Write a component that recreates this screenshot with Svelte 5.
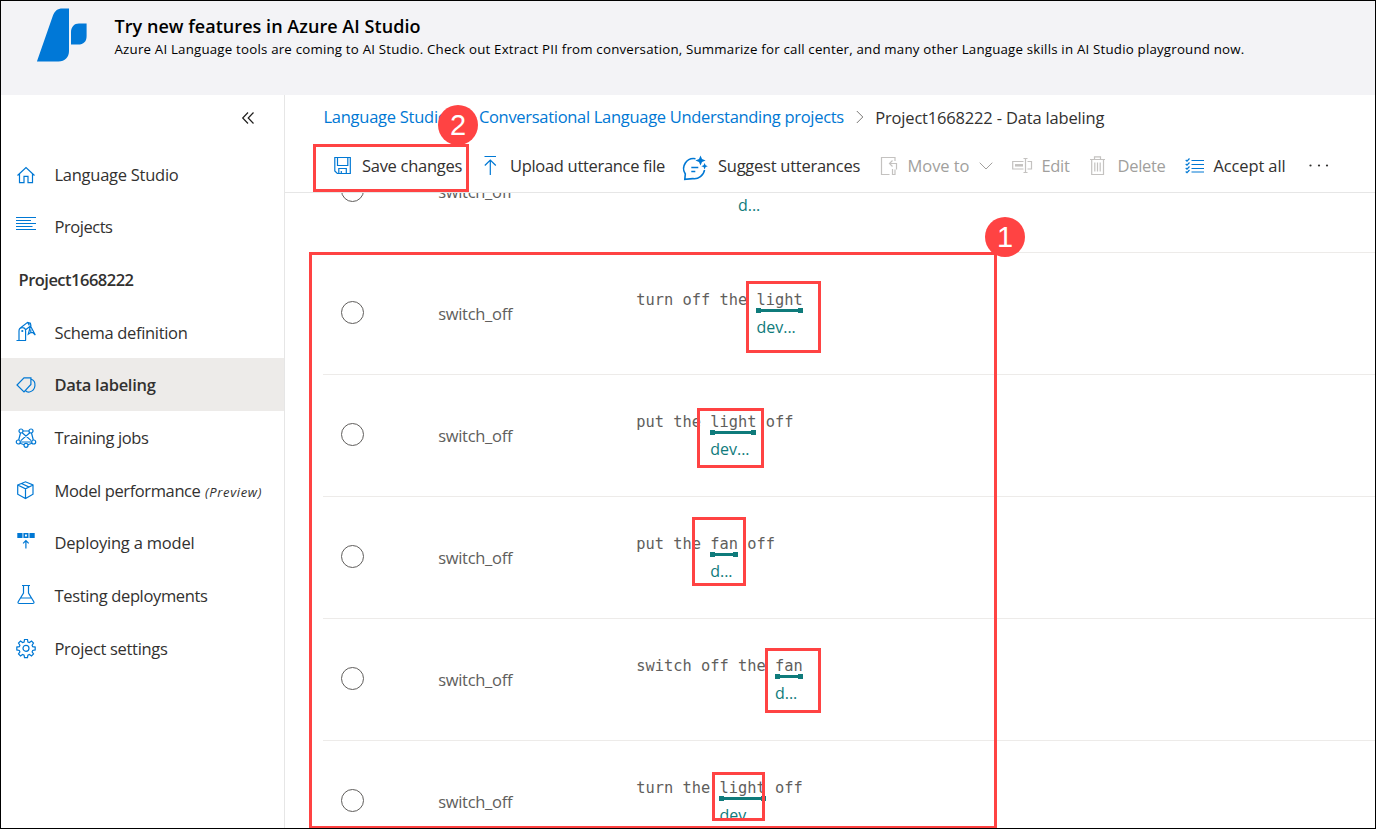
<script>
  const nav = [
    { icon: 'home', label: 'Language Studio', width: 124 },
    { icon: 'list', label: 'Projects', width: 58 },
    { heading: true, label: 'Project1668222', width: 115 },
    { icon: 'arm', label: 'Schema definition', width: 133 },
    { icon: 'tag', label: 'Data labeling', width: 101, active: true },
    { icon: 'graph', label: 'Training jobs', width: 94 },
    { icon: 'cube', label: 'Model performance', width: 146, note: '(Preview)' },
    { icon: 'deploy', label: 'Deploying a model', width: 140 },
    { icon: 'flask', label: 'Testing deployments', width: 153 },
    { icon: 'gear', label: 'Project settings', width: 113 }
  ];

  const commands = [
    { icon: 'save', label: 'Save changes', width: 100, slot: 150, text: 30 },
    { icon: 'upload', label: 'Upload utterance file', width: 155, slot: 199, text: 28 },
    { icon: 'suggest', label: 'Suggest utterances', width: 142, slot: 198, text: 37 },
    { icon: 'move', label: 'Move to', width: 62, slot: 133, text: 28.5, off: true, menu: true },
    { icon: 'edit', label: 'Edit', width: 28, slot: 77, text: 29.5, off: true },
    { icon: 'trash', label: 'Delete', width: 48, slot: 96, text: 28.5, off: true },
    { icon: 'checks', label: 'Accept all', width: 72, slot: 124, text: 28.5 }
  ];

  const rows = [
    { before: '           ', entity: '     ', after: '', tag: 'd...' },
    { before: 'turn off the ', entity: 'light', after: '', tag: 'dev...' },
    { before: 'put the ', entity: 'light', after: ' off', tag: 'dev...' },
    { before: 'put the ', entity: 'fan', after: ' off', tag: 'd...' },
    { before: 'switch off the ', entity: 'fan', after: '', tag: 'd...' },
    { before: 'turn the ', entity: 'light', after: ' off', tag: 'dev...' }
  ];

  const boxes = [
    [313, 144, 156, 48], [309, 252, 688, 577], [746, 281, 75, 72], [697, 408, 67, 60],
    [692, 517, 54, 69], [765, 648, 56, 65], [712, 772, 53, 49]
  ];

  // Spreads the letters of a label evenly over the width given.
  function fit(node, width) {
    const natural = node.getBoundingClientRect().width;
    node.style.letterSpacing = (width - natural) / node.textContent.length + 'px';
  }
</script>

{#snippet glyph(name)}
  {#if name === 'home'}
    <svg viewBox="0 0 20 20"><path d="M1.5 10.5 10 2.5l8.5 8M3.5 9v8.700H8v-6.400h4v6.400h4.500V9" /></svg>
  {:else if name === 'list'}
    <svg viewBox="0 0 20 20"><path d="M0 .5h20M0 3.500h15M0 6.500h20M0 9.500h16.500M0 12.500h20" /></svg>
  {:else if name === 'arm'}
    <svg viewBox="0 0 20 20"><path d="M.5 17.500h9.500M3 17.500V8a3.300 3.300 0 0 1 6.600 0v9.500M4 5.300 11.600-.6l2.800.8.500 2.500L9.300 6.900M11.600-.6l1.800 3M14.500 3l-2.200 8.200 2.500-1.700 2 .1 2.500 2.400L14.500 3M14.800 9.500V6.500" /><circle cx="6.300" cy="8" r=".5" /></svg>
  {:else if name === 'tag'}
    <svg viewBox="0 0 20 20"><path d="M8 2.800h6.900V9.500L8 17 1 10Z M15 4c6 2.300 5 11.500-1.500 13-1.800.4-3-.1-4-1.300" /></svg>
  {:else if name === 'graph'}
    <svg viewBox="0 0 20 20"><g><path d="M7 3h6M4.500 5 2.700 12M15.500 5l1.800 7M6.200 4.800l9 7.800M13.800 4.800l-9 7.800M4.500 14h11M4 15.300l4.200 1.500M16 15.300l-4.200 1.500" /><circle cx="5" cy="3" r="2" /><circle cx="15" cy="3" r="2" /><circle cx="2.300" cy="14" r="2" /><circle cx="17.700" cy="14" r="2" /><circle cx="10" cy="17.300" r="2" /></g></svg>
  {:else if name === 'cube'}
    <svg viewBox="0 0 20 20"><path d="M1.700 4 9.500.8 17 4v9.200L9.500 17.500 1.700 13.200ZM1.700 4l7.800 3.800L17 4M9.500 7.800v9.700M5.500 2.500l7.700 3.600" /></svg>
  {:else if name === 'deploy'}
    <svg viewBox="0 0 20 20"><path class="solid" d="M1.300 0h5.200v5H1.300ZM13.500 0h5.200v5h-5.200Z" /><path class="bold" d="M8.200.800h3.500v3.400H8.200Z" /><path d="M9.900 15.500V7.700M7.100 10.300l2.800-2.800 2.800 2.800" /></svg>
  {:else if name === 'flask'}
    <svg viewBox="0 0 20 20"><path d="M6-.5h8M7.500-.5V7L2.200 15.800c-.5 1 0 1.700 1 1.700h13.600c1 0 1.500-.7 1-1.700L12.500 7V-.5M5 12h10" /></svg>
  {:else if name === 'gear'}
    <svg viewBox="0 0 20 20"><circle cx="10" cy="9.300" r="3" /><path d="m8.500.5 3 0 .4 2.500 1.500.6 2.100-1.500 2 2-1.400 2.100.6 1.500 2.500.4v2.800l-2.500.5-.6 1.500 1.400 2.100-2 2-2.100-1.500-1.500.6-.4 2.500h-3l-.4-2.500-1.500-.6-2.100 1.500-2-2 1.400-2.100-.6-1.500-2.500-.5V8.100l2.500-.4.6-1.500-1.400-2.100 2-2 2.100 1.500 1.500-.6Z" /></svg>
  {:else if name === 'save'}
    <svg viewBox="0 0 20 20"><path d="M2.800 1.500h15.500v16H5.300L2.800 15ZM5.500 1.500v8h10.300v-8M6.800 17.500v-5h7.500v5M9.300 15v2.500" /></svg>
  {:else if name === 'upload'}
    <svg viewBox="0 0 20 20"><path d="M2.500 .5h11.500M8.300 19V4M2.800 9.500 8.300 4l5.500 5.500" /></svg>
  {:else if name === 'suggest'}
    <svg class="wide" viewBox="0 0 26 26"><path class="bold" d="M14.500 3.700A10 10 0 0 0 4.300 19L3.800 24.300l8-.7A10.300 10.300 0 0 0 23.500 15M10.300 12.500h7M10.300 16.500h4" /><path class="solid" d="m19.500.5 1.500 3.600 3.600 1.400-3.600 1.400-1.500 3.600-1.500-3.600-3.600-1.400 3.600-1.400ZM23.600 8l1 2.300 2.200.9-2.200.9-1 2.400-1-2.400-2.300-.9 2.300-.9Z" /></svg>
  {:else if name === 'move'}
    <svg viewBox="0 0 20 20"><path d="M16 5V1.500H2.500v17h8M16 13.500v5h-2.500V13M17.500 13.500V7.500H10.500M13.500 4.500l-3 3 3 3" /></svg>
  {:else if name === 'edit'}
    <svg viewBox="0 0 20 20"><path d="M11.500 5.500H.7v7.500h10.800M15.500 5.500h4V13h-4M11.500 2.500h4M11.500 16.500h4M13.500 2.500v14" /><path class="thick" d="M3 9.300h8" /></svg>
  {:else if name === 'trash'}
    <svg viewBox="0 0 20 20"><path d="M1 3.500h15M5.500 3V.8h6V3M2.700 3.500v15h11.800v-15M5.800 6.500v9M8.500 6.500v9M11.200 6.500v9" /></svg>
  {:else if name === 'checks'}
    <svg viewBox="0 0 20 20"><path d="M6.500 4.500H19M6.500 8.500H19M6.500 12.500H19M6.500 16H19M.7 4l1.300 1.200L4.500 2.500M.7 8 2 9.200l2.500-2.700M.7 12 2 13.200l2.500-2.700M.7 15.500 2 16.700 4.500 14" /></svg>
  {/if}
{/snippet}

<div class="page">
  <header>
    <svg class="logo" viewBox="0 0 51 54"><path d="M0 53.300 15.600 8.500C17.700 2.500 20.500.4 25.500.4H32V43c0 6-4 10.500-10.500 10.500H.7C.2 53.500 0 53.600 0 53.300ZM34 36.600V24.500C34 19 37.200 15.600 42 15.600h7.600V28c0 5.500-3 8.600-8.500 8.600Z" /></svg>
    <div class="headline">
      <h1><span use:fit={306}>Try new features in Azure AI Studio</span></h1>
      <p><span use:fit={1130}>Azure AI Language tools are coming to AI Studio. Check out Extract PII from conversation, Summarize for call center, and many other Language skills in AI Studio playground now.</span></p>
    </div>
  </header>

  <div class="body">
    <nav>
      <div class="collapse"><svg viewBox="0 0 12 12"><path d="M6 .5.700 6 6 11.500M11.500.5 6.200 6l5.300 5.500" /></svg></div>
      {#each nav as item}
        <div class="item" class:heading={item.heading} class:active={item.active}>
          {#if item.icon}<i>{@render glyph(item.icon)}</i>{/if}
          <span use:fit={item.width}>{item.label}</span>
          {#if item.note}<em use:fit={57}>{item.note}</em>{/if}
        </div>
      {/each}
    </nav>

    <main>
      <div class="crumbs">
        <a><span use:fit={124}>Language Studio</span></a>
        <svg class="sep" viewBox="0 0 8 14"><path d="m.8 1 6 6-6 6" /></svg>
        <a><span use:fit={365}>Conversational Language Understanding projects</span></a>
        <svg class="sep" viewBox="0 0 8 14"><path d="m.8 1 6 6-6 6" /></svg>
        <b><span use:fit={229}>Project1668222 - Data labeling</span></b>
      </div>

      <div class="commands">
        {#each commands as c}
          <div class="command" class:off={c.off} style:width="{c.slot}px">
            <i style:width="{c.text}px">{@render glyph(c.icon)}</i>
            <span use:fit={c.width}>{c.label}</span>
            {#if c.menu}<svg class="down" viewBox="0 0 14 8"><path d="m.7.7 6.300 6.300 6.300-6.300" /></svg>{/if}
          </div>
        {/each}
        <svg class="more" viewBox="0 0 20 3"><circle cx="1.500" cy="1.500" r="1.100" /><circle cx="10" cy="1.500" r="1.100" /><circle cx="18" cy="1.500" r="1.100" /></svg>
      </div>

      <div class="scroller">
        <div class="rows">
          {#each rows as r}
            <div class="row">
              <div class="radio"></div>
              <div class="intent"><span use:fit={74}>switch_off</span></div>
              <div class="utterance">
                <span>{r.before}</span>
                <div class="entity"><span>{r.entity}</span><div class="bar"></div><div class="name">{r.tag}</div></div>
                <span>{r.after}</span>
              </div>
            </div>
          {/each}
        </div>
      </div>
    </main>
  </div>

  {#each boxes as [x, y, w, h]}
    <div class="box" style:left="{x}px" style:top="{y}px" style:width="{w}px" style:height="{h}px"></div>
  {/each}
  <div class="badge one">1</div>
  <div class="badge two">2</div>
  <div class="frame"></div>
</div>

<style>
  .page, .page * { box-sizing: border-box; }
  .page {
    position: relative;
    width: 1376px;
    height: 829px;
    overflow: hidden;
    display: flex;
    flex-direction: column;
    background: #fff;
    color: #323130;
    font: 16.500px/24px 'Open Sans', 'Noto Sans', sans-serif;
  }
  .page span, .page em { white-space: pre; }
  svg { display: block; overflow: visible; fill: none; stroke: currentColor; stroke-width: 1.2; }
  svg .solid { fill: currentColor; stroke: none; }
  svg .bold { stroke-width: 1.6; }
  svg .thick { stroke-width: 2.5; }

  header { height: 95px; flex: none; background: #f3f3f6; display: flex; padding: 8px 0 0 37px; color: #000; }
  .logo { width: 51px; height: 54px; fill: #0078d7; stroke: none; }
  .headline { padding: 5px 0 0 26.500px; }
  h1 { margin: 0; font-size: 18px; font-weight: 600; line-height: 26px; }
  p { margin: 1px 0 0; font-size: 13.300px; line-height: 18px; }

  .body { flex: 1; display: flex; min-height: 0; }
  nav { width: 285px; border-right: 1px solid #e6e6e6; flex: none; }
  .collapse { height: 52.600px; padding: 17px 0 0 242px; color: #201f1e; }
  .collapse svg { width: 12px; height: 12px; }
  .item { height: 52.700px; display: flex; align-items: center; padding: 1.300px 0 0 16px; }
  .item i { width: 38.500px; color: #0078d4; }
  .item svg { width: 20px; height: 20px; }
  .item em { font-size: 13px; margin-left: 4.500px; padding-top: 2px; }
  .item.heading { padding-left: 18.500px; font-weight: 600; }
  .active { background: #edebe9; font-weight: 600; }

  main { flex: 1; display: flex; flex-direction: column; min-width: 0; }
  .crumbs { height: 45px; display: flex; align-items: center; padding: 0 0 2px 38.500px; }
  .crumbs a { color: #0078d4; }
  .crumbs b { font-weight: 400; padding-top: 2px; }
  .sep { width: 8px; height: 14px; margin: 0 11.700px; color: #7a7876; stroke-width: 1; }
  .commands { height: 53px; display: flex; align-items: center; padding-left: 47px; border-bottom: 1px solid #e6e6e6; }
  .command { display: flex; align-items: center; flex: none; }
  .command svg { width: 20px; height: 20px; color: #0078d4; }
  .command svg.wide { width: 26px; height: 26px; margin-top: 3px; }
  .command.off { color: #a19f9d; }
  .command.off svg { color: #c4c2c0; }
  .command.off svg.down { width: 14px; height: 8px; margin-left: 9.500px; color: #a19f9d; stroke-width: 1; }
  .more { width: 20px; height: 3px; margin-top: -2px; fill: #323130; stroke: none; }

  .scroller { height: 625px; flex: none; overflow: hidden; padding-left: 38px; }
  .rows { margin-top: -62px; }
  .row { height: 122px; display: grid; grid-template-columns: 97.200px 198px 1fr; border-bottom: 1px solid #edebe9; padding-left: 18px; color: #605e5c; }
  .radio { width: 23px; height: 23px; border: 1.500px solid #605e5c; border-radius: 50%; margin-top: 48px; }
  .intent { padding-top: 49px; }
  .utterance { display: flex; align-items: flex-start; padding-top: 37px; font: 15.360px/20px 'DejaVu Sans Mono', monospace; }
  .bar { height: 3px; margin-top: -1px; background: #0f7b7b; position: relative; }
  .bar::before, .bar::after { content: ''; position: absolute; top: -1px; width: 5px; height: 5px; background: #0f7b7b; }
  .bar::before { left: 0; }
  .bar::after { right: 0; }
  .name { width: 0; font: 16px/24px 'Open Sans', sans-serif; color: #0f7b7b; margin-top: 3px; }

  .box { position: absolute; border: 3px solid #ff4343; }
  .badge { position: absolute; width: 40px; height: 40px; border-radius: 50%; background: #ff4343; color: #fff; text-align: center; font: 29px/41px 'Liberation Sans', sans-serif; }
  .one { left: 985px; top: 217px; }
  .two { left: 438px; top: 105px; }
  .frame { position: absolute; inset: 0; border: 1px solid #000; pointer-events: none; }
</style>
